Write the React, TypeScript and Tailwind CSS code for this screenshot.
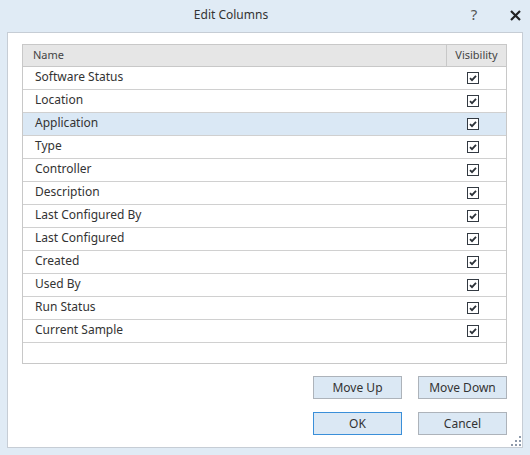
import React from "react";

const columns = [
  "Software Status",
  "Location",
  "Application",
  "Type",
  "Controller",
  "Description",
  "Last Configured By",
  "Last Configured",
  "Created",
  "Used By",
  "Run Status",
  "Current Sample",
];

function CheckBox() {
  return (
    <svg width="12" height="12" viewBox="0 0 12 12">
      <rect x="0.5" y="0.5" width="11" height="11" fill="white" stroke="#333a42" />
      <path d="M3 6.2 L5 8.2 L9 3.8" fill="none" stroke="#2b3138" strokeWidth="1.8" />
    </svg>
  );
}

function DialogButton({ label, focused }: { label: string; focused?: boolean }) {
  return (
    <button
      className={`w-[89px] h-[23px] bg-[#dbe8f4] text-[12px] text-[#333] border ${
        focused ? "border-[#3a8fd9]" : "border-[#adb3ba]"
      }`}
    >
      {label}
    </button>
  );
}

export default function App() {
  const selected = "Application";

  return (
    <div className="w-[530px] h-[455px] bg-[#e0ebf5] flex flex-col relative font-['Segoe_UI','Noto_Sans',sans-serif] text-[#333]">
      {/* Title bar */}
      <div className="h-[32px] flex items-center flex-shrink-0">
        <div className="w-[462px] text-center text-[12px] text-[#333] pb-[3px]">Edit Columns</div>
        <div className="w-[24px] text-center text-[15px] text-[#555] pb-[3px]">?</div>
        <div className="ml-[24px] flex items-center pb-[2px]">
          <svg width="11" height="11" viewBox="0 0 11 11">
            <path d="M1 1 L10 10 M10 1 L1 10" stroke="#222" strokeWidth="2.2" />
          </svg>
        </div>
      </div>

      {/* Body */}
      <div className="mx-[7px] mb-[7px] flex-1 bg-white border border-[#c6cdd5] flex flex-col pt-[11px] pl-[14px] pr-[15px]">
        <div className="h-[320px] border border-[#c8c8c8] flex flex-col">
          <div className="h-[22px] bg-[#e6e6e6] border-b border-[#c8c8c8] flex text-[11px] text-[#444] flex-shrink-0">
            <div className="flex-1 pl-[10px] flex items-center">Name</div>
            <div className="w-[60px] border-l border-[#c8c8c8] flex items-center justify-center">Visibility</div>
          </div>
          {columns.map((c) => (
            <div
              key={c}
              className={`h-[23px] border-b border-[#d0d0d0] flex flex-shrink-0 text-[12px] ${
                c === selected ? "bg-[#dae8f5]" : "bg-white"
              }`}
            >
              <div className="flex-1 pl-[12px] flex items-center pb-[2px]">{c}</div>
              <div className="w-[60px] flex items-center justify-center pr-[6px]">
                <CheckBox />
              </div>
            </div>
          ))}
        </div>

        <div className="mt-[12px] self-end grid grid-cols-2 gap-x-[16px] gap-y-[13px]">
          <DialogButton label="Move Up" />
          <DialogButton label="Move Down" />
          <DialogButton label="OK" focused />
          <DialogButton label="Cancel" />
        </div>
      </div>

      {/* Resize grip */}
      <svg className="absolute right-[8px] bottom-[8px]" width="11" height="11" viewBox="0 0 11 11">
        <g fill="#8d9aab">
          <rect x="8" y="0" width="2" height="2" />
          <rect x="4" y="4" width="2" height="2" />
          <rect x="8" y="4" width="2" height="2" />
          <rect x="0" y="8" width="2" height="2" />
          <rect x="4" y="8" width="2" height="2" />
          <rect x="8" y="8" width="2" height="2" />
        </g>
      </svg>
    </div>
  );
}
